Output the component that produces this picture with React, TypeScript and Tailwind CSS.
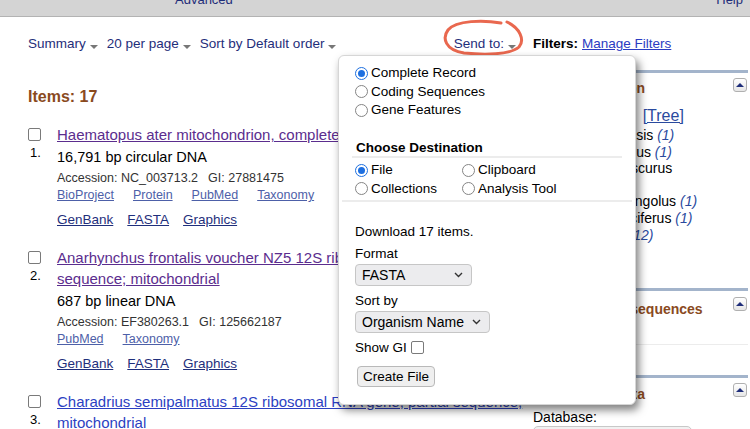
import React from 'react'

// ── Small widgets ─────────────────────────────────────────────────────────────

function Caret() {
  return (
    <span className="ml-[4px] inline-block translate-y-[1px] border-x-[4px] border-t-[4px] border-x-transparent border-t-[#777]" />
  )
}

function Radio({ checked }: { checked?: boolean }) {
  return checked ? (
    <span className="flex h-[13px] w-[13px] shrink-0 items-center justify-center rounded-full border-[1.5px] border-[#1d6fe0] bg-white">
      <span className="h-[7px] w-[7px] rounded-full bg-[#1d6fe0]" />
    </span>
  ) : (
    <span className="h-[13px] w-[13px] shrink-0 rounded-full border border-[#858585] bg-white" />
  )
}

function Box() {
  return <span className="block h-[13px] w-[13px] shrink-0 rounded-[2px] border-[1.5px] border-[#7a7a7a] bg-white" />
}

function RadioRow({ label, checked }: { label: string; checked?: boolean }) {
  return (
    <div className="flex h-[18.5px] items-center gap-[3px]">
      <Radio checked={checked} />
      <span>{label}</span>
    </div>
  )
}

function Chevron() {
  return (
    <svg width="9" height="6" viewBox="0 0 9 6" className="shrink-0">
      <path d="M1 1 L4.5 4.5 L8 1" fill="none" stroke="#333" strokeWidth="1.4" />
    </svg>
  )
}

function FakeSelect({ label, className }: { label: string; className: string }) {
  return (
    <div className={`flex items-center justify-between rounded-[4px] border border-[#c6c6c6] bg-[#ececee] pl-[6px] pr-[8px] text-[14px] ${className}`}>
      <span>{label}</span>
      <Chevron />
    </div>
  )
}

function Collapse() {
  return (
    <span className="flex h-[14px] w-[14px] items-center justify-center rounded-[3px] border border-[#b0b0b0] bg-gradient-to-b from-white to-[#e6e6e6]">
      <span className="border-x-[4px] border-b-[4px] border-x-transparent border-b-[#1f2e7a]" />
    </span>
  )
}

// ── Result items ──────────────────────────────────────────────────────────────

interface Result {
  n:       number
  title:   string
  visited: boolean
  size?:   string
  acc?:    string
  gi?:     string
  links?:  string[]
}

const results: Result[] = [
  {
    n: 1,
    title: 'Haematopus ater mitochondrion, complete genome',
    visited: true,
    size: '16,791 bp circular DNA',
    acc: 'NC_003713.2',
    gi: '27881475',
    links: ['BioProject', 'Protein', 'PubMed', 'Taxonomy'],
  },
  {
    n: 2,
    title: 'Anarhynchus frontalis voucher NZ5 12S ribosomal RNA gene, partial sequence; mitochondrial',
    visited: true,
    size: '687 bp linear DNA',
    acc: 'EF380263.1',
    gi: '125662187',
    links: ['PubMed', 'Taxonomy'],
  },
  {
    n: 3,
    title: 'Charadrius semipalmatus 12S ribosomal RNA gene, partial sequence, mitochondrial',
    visited: false,
  },
]

function ResultItem({ r }: { r: Result }) {
  return (
    <div className="mb-[18px] flex">
      <div className="w-[29px] shrink-0">
        <div className="mt-[4px]"><Box /></div>
        <div className="mt-[4px] pl-[2px] text-[13px] leading-[16px]">{r.n}.</div>
      </div>
      <div className="min-w-0 flex-1">
        <div className="text-[15px] leading-[21px]">
          <a className={`underline ${r.visited ? 'text-[#5b2d8e]' : 'text-[#2c3fc2]'}`}>{r.title}</a>
        </div>
        {r.size && (
          <>
            <p className="mt-[2px] text-[14.5px] leading-[20px]">{r.size}</p>
            <p className="mt-[2px] text-[12.5px] leading-[18px] text-[#333]">
              Accession: {r.acc}<span className="ml-[10px]">GI: {r.gi}</span>
            </p>
            <div className="flex gap-[19px] text-[12.5px] leading-[17px] text-[#4d60a8]">
              {r.links!.map(l => <a key={l} className="underline">{l}</a>)}
            </div>
            <div className="mt-[7px] flex gap-[14px] text-[13.5px] leading-[18px] text-[#1f2f7c]">
              <a className="underline">GenBank</a>
              <a className="underline">FASTA</a>
              <a className="underline">Graphics</a>
            </div>
          </>
        )}
      </div>
    </div>
  )
}

// ── Page ──────────────────────────────────────────────────────────────────────

export default function App() {
  return (
    <div className="relative h-[429px] w-[750px] overflow-hidden bg-white font-['Liberation_Sans',Arial,sans-serif] text-black">

      {/* Top nav strip, mostly scrolled off */}
      <div className="h-[17px] overflow-hidden border-b border-[#b3b3b3] bg-[#d4d4d4] text-[13px] leading-[16px] text-[#1f2e7a]">
        <div className="-mt-[8px] flex">
          <span className="ml-[175px]">Advanced</span>
          <span className="ml-auto mr-[7px]">Help</span>
        </div>
      </div>

      <div className="flex pl-[28px]">

        {/* Results column */}
        <div className="w-[500px] shrink-0">
          <div className="mt-[17px] flex h-[20px] items-center pr-[12px] text-[13.5px] text-[#1f2e7a]">
            <span>Summary<Caret /></span>
            <span className="ml-[9px]">20 per page<Caret /></span>
            <span className="ml-[9px]">Sort by Default order<Caret /></span>
            <span className="ml-auto">Send to:<Caret /></span>
          </div>

          <h2 className="mt-[33px] text-[16px] font-bold leading-[20px] text-[#8a4a1e]">Items: 17</h2>

          <div className="mt-[17px]">
            {results.map(r => <ResultItem key={r.n} r={r} />)}
          </div>
        </div>

        {/* Sidebar */}
        <div className="ml-[2px] w-[218px] shrink-0">
          <div className="mt-[17px] flex h-[20px] items-center pl-[3px] text-[13.5px]">
            <b>Filters:</b>
            <a className="ml-[4px] text-[#2a3cc2] underline">Manage Filters</a>
          </div>

          {/* Results by taxon */}
          <div className="mt-[16px] border-t-[3px] border-[#a3b4cb]">
            <div className="flex items-start justify-between pl-[3px] pr-[1px]">
              <span className="mt-[6px] text-[14px] font-bold leading-[18px] text-[#8a4a1e]">Results by taxon</span>
              <span className="mt-[5px]"><Collapse /></span>
            </div>
            <div className="mt-[10px] flex items-center pl-[3px] text-[14px] leading-[18px]">
              <b>Top Organisms</b>
              <a className="ml-[8px] text-[16px] text-[#2a4a9e] underline">[Tree]</a>
            </div>
            <ul className="mt-[2px] pl-[13px] pr-[20px] text-[14px] leading-[16.6px]">
              <li>Vanellus chilensis <i className="text-[#2a4a9e]">(1)</i></li>
              <li>Vanellus vanellus <i className="text-[#2a4a9e]">(1)</i></li>
              <li>Charadrius obscurus aquilonius <i className="text-[#2a4a9e]">(1)</i></li>
              <li>Charadrius mongolus <i className="text-[#2a4a9e]">(1)</i></li>
              <li>Charadrius vociferus <i className="text-[#2a4a9e]">(1)</i></li>
              <li>All other taxa <i className="text-[#2a4a9e]">(12)</i></li>
            </ul>
          </div>

          {/* Analyze these sequences */}
          <div className="mt-[45px] border-t-[3px] border-[#a3b4cb]">
            <div className="flex items-start justify-between pl-[3px] pr-[1px]">
              <span className="mt-[9px] text-[14px] font-bold leading-[18px] text-[#8a4a1e]">Analyze these sequences</span>
              <span className="mt-[6px]"><Collapse /></span>
            </div>
            <div className="mt-[3px] pl-[3px] text-[14px] leading-[18px] text-[#2a3cc2]">Run BLAST</div>
            <div className="mt-[5px] border-b border-[#ececec]" />
          </div>

          {/* Find related data */}
          <div className="mt-[30px] border-t-[3px] border-[#a3b4cb]">
            <div className="flex items-start justify-between pl-[3px] pr-[1px]">
              <span className="mt-[7px] text-[14px] font-bold leading-[18px] text-[#8a4a1e]">Find related data</span>
              <span className="mt-[5px]"><Collapse /></span>
            </div>
            <div className="mt-[6px] pl-[3px] text-[14px] leading-[17px]">Database:</div>
            <div className="ml-[3px] h-[22px] w-[159px] rounded-[5px] border border-[#c8c8c8] bg-[#f1f1f1]" />
          </div>
        </div>
      </div>

      {/* Hand-drawn annotation around "Send to" */}
      <svg className="absolute left-[440px] top-[18px]" width="90" height="40" viewBox="0 0 90 40">
        <path
          d="M61 5 C44 2, 16 2, 8 12 C2 20, 5 32, 24 35 C44 37, 70 37, 79 29 C85 22, 80 10, 67 4"
          fill="none" stroke="#e9684f" strokeWidth="3" strokeLinecap="round"
        />
      </svg>

      {/* Send to popup */}
      <div className="absolute left-[338px] top-[55px] h-[350px] w-[298px] rounded-[6px] border border-[#d6d6d6] bg-white text-[13.5px] shadow-[3px_5px_8px_rgba(0,0,0,0.5)]">
        <div className="px-[16px] pt-[8px]">
          <RadioRow label="Complete Record" checked />
          <RadioRow label="Coding Sequences" />
          <RadioRow label="Gene Features" />

          <div className="-ml-[3px] mt-[19.5px] w-[270px] border-b-2 border-[#ececec] pl-[4px] font-bold leading-[17px]">
            Choose Destination
          </div>

          <div className="mt-[3px] grid grid-cols-[107px_auto]">
            <RadioRow label="File" checked />
            <RadioRow label="Clipboard" />
            <RadioRow label="Collections" />
            <RadioRow label="Analysis Tool" />
          </div>
        </div>

        <div className="mx-[3px] mt-[2px] border-t-2 border-[#ececec]" />

        <div className="px-[16px] leading-[18px]">
          <p className="mt-[20.5px]">Download 17 items.</p>
          <p className="mt-[4.5px]">Format</p>
          <FakeSelect label="FASTA" className="mt-[1px] h-[22px] w-[117px]" />
          <p className="mt-[5.5px]">Sort by</p>
          <FakeSelect label="Organism Name" className="mt-[1px] h-[22px] w-[135px]" />
          <div className="mt-[6px] flex items-center gap-[4px]">
            <span>Show GI</span>
            <Box />
          </div>
          <button className="ml-[2px] mt-[9px] h-[21px] w-[78px] rounded-[4px] border border-[#b9b9b9] bg-[#efefef] text-[13.5px] leading-[19px]">
            Create File
          </button>
        </div>
      </div>
    </div>
  )
}
